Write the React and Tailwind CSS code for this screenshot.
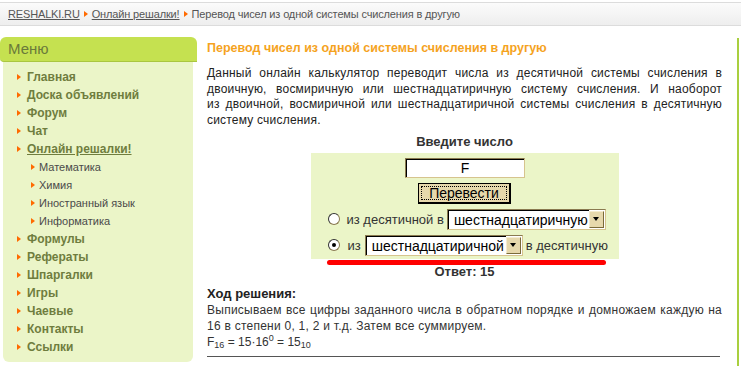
import React from "react";

const F = { fontFamily: '"Liberation Sans", Arial, sans-serif' };

function Tri({ className = "" }) {
  return (
    <span
      className={
        "inline-block w-0 h-0 border-y-[3.5px] border-y-transparent border-l-[4px] border-l-[#ff6a00] " +
        className
      }
    />
  );
}

function MenuItem({ children, underline }) {
  return (
    <div className="flex items-center h-[18px] pl-[14px]">
      <Tri className="mr-[6px]" />
      <span
        className={
          "text-[12px] font-bold text-[#6f7d3e] " + (underline ? "underline" : "")
        }
      >
        {children}
      </span>
    </div>
  );
}

function SubItem({ children }) {
  return (
    <div className="flex items-center h-[18px] pl-[28px]">
      <Tri className="mr-[4px]" />
      <span className="text-[11px] text-[#4a4a4a]">{children}</span>
    </div>
  );
}

function Select({ text, width }) {
  return (
    <div
      className="flex items-center h-[21px] bg-white border border-[#d6c48e] border-t-[#8a7a50] border-l-[#8a7a50]"
      style={{ width }}
    >
      <div className="flex-1 flex items-center h-full border-t border-l border-black pl-[5px] text-[14px] text-black leading-none">
        {text}
      </div>
      <div className="w-[15px] h-[17px] mr-[1px] bg-[#e6d8ac] border border-[#f5ecd0] border-r-[#7a6a3a] border-b-[#7a6a3a] flex items-center justify-center">
        <span className="w-0 h-0 border-x-[3px] border-x-transparent border-t-[4px] border-t-black" />
      </div>
    </div>
  );
}

function Radio({ checked }) {
  return (
    <div className="w-[12px] h-[12px] rounded-full bg-white border border-[#8a7a50] border-t-[#333] border-l-[#333] flex items-center justify-center">
      {checked && <div className="w-[4px] h-[4px] rounded-full bg-black" />}
    </div>
  );
}

function JLine({ children }) {
  return <div className="text-justify [text-align-last:justify]">{children}</div>;
}

export default function App() {
  return (
    <div className="w-[741px] h-[366px] overflow-hidden bg-white relative" style={F}>
      {/* breadcrumb */}
      <div className="mt-[2px] h-[24px] border-y border-y-[#dcdcdc] bg-gradient-to-b from-[#fbfbfb] to-[#eeeeee] flex items-center pl-[8px] text-[11px] tracking-[-0.15px] text-[#555]">
        <span className="underline">RESHALKI.RU</span>
        <Tri className="mx-[4px]" />
        <span className="underline">Онлайн решалки!</span>
        <Tri className="mx-[4px]" />
        <span>Перевод чисел из одной системы счисления в другую</span>
      </div>

      <div className="flex">
        {/* left menu */}
        <div className="w-[197px] mt-[11px]">
          <div className="h-[25px] rounded-t-[6px] rounded-bl-[4px] bg-[#c5e150] border-b border-b-[#aac640] flex items-center pl-[8px] text-[15px] text-[#6a7a3a]">
            Меню
          </div>
          <div className="mx-[3px] w-[190px] bg-[#ebf5c8] rounded-b-[6px] pt-[6px] pb-[6px]">
            <MenuItem>Главная</MenuItem>
            <MenuItem>Доска объявлений</MenuItem>
            <MenuItem>Форум</MenuItem>
            <MenuItem>Чат</MenuItem>
            <MenuItem underline>Онлайн решалки!</MenuItem>
            <SubItem>Математика</SubItem>
            <SubItem>Химия</SubItem>
            <SubItem>Иностранный язык</SubItem>
            <SubItem>Информатика</SubItem>
            <MenuItem>Формулы</MenuItem>
            <MenuItem>Рефераты</MenuItem>
            <MenuItem>Шпаргалки</MenuItem>
            <MenuItem>Игры</MenuItem>
            <MenuItem>Чаевые</MenuItem>
            <MenuItem>Контакты</MenuItem>
            <MenuItem>Ссылки</MenuItem>
          </div>
        </div>

        {/* content */}
        <div className="ml-[10px] w-[515px] mt-[14px] text-[#222]">
          <div className="text-[12.5px] font-bold text-[#f5a31e] leading-[16px]">
            Перевод чисел из одной системы счисления в другую
          </div>
          <div className="mt-[10px] text-[12px] tracking-[0.2px] leading-[15.7px] text-[#222]">
            <JLine>Данный онлайн калькулятор переводит числа из десятичной системы счисления в</JLine>
            <JLine>двоичную, восмиричную или шестнадцатиричную систему счисления. И наоборот</JLine>
            <JLine>из двоичной, восмиричной или шестнадцатиричной системы счисления в десятичную</JLine>
            <div>систему счисления.</div>
          </div>
          <div className="mt-[5px] text-center text-[13px] font-bold text-[#333] leading-[16px]">
            Введите число
          </div>
          <div className="mt-[3px] mx-auto w-[308px] h-[106px] bg-[#ebf5c8] flex flex-col items-center pt-[5px]">
            <div className="w-[120px] h-[20px] bg-white border border-[#d6c48e] border-t-[#8a7a50] border-l-[#8a7a50]">
              <div className="h-full border-t border-l border-black flex items-center justify-center text-[14px] text-black">
                F
              </div>
            </div>
            <div className="mt-[5px] w-[93px] h-[21px] bg-[#e6d8ac] border border-black border-r-2 border-b-2 p-[2px]">
              <div className="h-full border border-dotted border-black flex items-center justify-center text-[14px] text-black leading-none">
                Перевести
              </div>
            </div>
            <div className="mt-[5px] w-full flex items-center pl-[17px] text-[13px] text-[#333]">
              <Radio />
              <span className="ml-[7px] mr-[3px]">из десятичной в</span>
              <Select text="шестнадцатиричную" width={159} />
            </div>
            <div className="mt-[5px] w-full flex items-center pl-[17px] text-[13px] text-[#333]">
              <Radio checked />
              <span className="ml-[8px] mr-[4px]">из</span>
              <Select text="шестнадцатиричной" width={158} />
              <span className="ml-[3px]">в десятичную</span>
            </div>
          </div>
          <div className="mx-auto w-[279px] h-[5px] rounded-full bg-[#ff0000] translate-x-[2px] mt-[1px]" />
          <div className="text-center text-[13px] font-bold text-[#333] leading-[14px]">
            Ответ: 15
          </div>
          <div className="mt-[7px] text-[13px] font-bold text-[#222] leading-[16px]">
            Ход решения:
          </div>
          <div className="text-[12px] tracking-[0.25px] leading-[16px] text-[#333]">
            <JLine>Выписываем все цифры заданного числа в обратном порядке и домножаем каждую на</JLine>
            <div>16 в степени 0, 1, 2 и т.д. Затем все суммируем.</div>
          </div>
          <div className="text-[12px] leading-[17px] text-[#333]">
            F<sub className="text-[9px]">16</sub> = 15·16<sup className="text-[9px]">0</sup> = 15
            <sub className="text-[9px]">10</sub>
          </div>
          <div className="mt-[5px] h-px bg-[#555] w-[513px]" />
        </div>

        <div className="ml-[15px] mt-[12px] w-[2px] h-[340px] bg-[#a9cf3f]" />
      </div>
    </div>
  );
}
